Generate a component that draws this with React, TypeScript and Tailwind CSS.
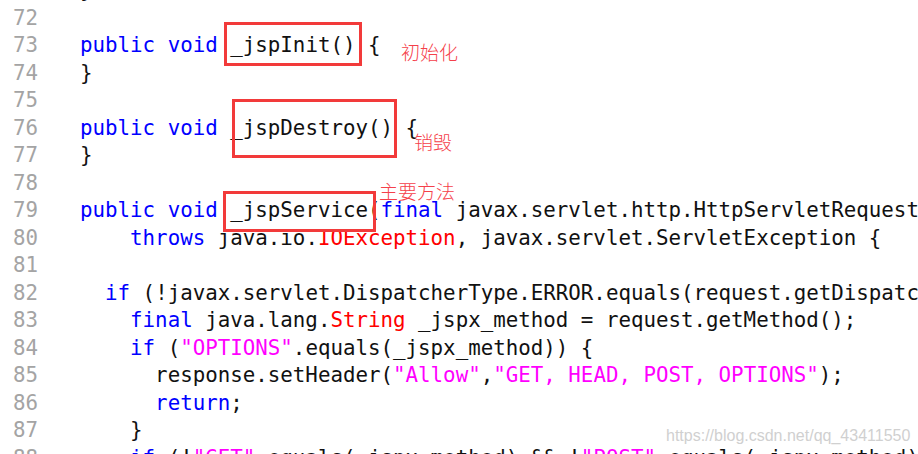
import React from 'react';

type Tok = [string, string];

const K = 'text-[#0000ff]';
const R = 'text-[#ff0000]';
const S = 'text-[#ff00ff]';
const N = 'text-[#111111]';

const lines: { no: number; toks: Tok[] }[] = [
  { no: 71, toks: [['}', N]] },
  { no: 72, toks: [] },
  { no: 73, toks: [['public void', K], [' _jspInit() {', N]] },
  { no: 74, toks: [['}', N]] },
  { no: 75, toks: [] },
  { no: 76, toks: [['public void', K], [' _jspDestroy() {', N]] },
  { no: 77, toks: [['}', N]] },
  { no: 78, toks: [] },
  {
    no: 79,
    toks: [
      ['public void', K],
      [' _jspService(', N],
      ['final', K],
      [' javax.servlet.http.HttpServletRequest request, javax.servlet.http.HttpServletResponse response)', N],
    ],
  },
  {
    no: 80,
    toks: [
      ['    throws', K],
      [' java.io.', N],
      ['IOException', R],
      [', javax.servlet.ServletException {', N],
    ],
  },
  { no: 81, toks: [] },
  {
    no: 82,
    toks: [
      ['  if', K],
      [' (!javax.servlet.DispatcherType.ERROR.equals(request.getDispatcherType())) {', N],
    ],
  },
  {
    no: 83,
    toks: [
      ['    final', K],
      [' java.lang.', N],
      ['String', R],
      [' _jspx_method = request.getMethod();', N],
    ],
  },
  {
    no: 84,
    toks: [
      ['    if', K],
      [' (', N],
      ['"OPTIONS"', S],
      ['.equals(_jspx_method)) {', N],
    ],
  },
  {
    no: 85,
    toks: [
      ['      response.setHeader(', N],
      ['"Allow"', S],
      [',', N],
      ['"GET, HEAD, POST, OPTIONS"', S],
      [');', N],
    ],
  },
  { no: 86, toks: [['      return', K], [';', N]] },
  { no: 87, toks: [['    }', N]] },
  {
    no: 88,
    toks: [
      ['    if', K],
      [' (!', N],
      ['"GET"', S],
      ['.equals(_jspx_method) && !', N],
      ['"POST"', S],
      ['.equals(_jspx_method) && !', N],
      ['"HEAD"', S],
      ['.equals(_jspx_method)) {', N],
    ],
  },
];

export default function App() {
  return (
    <div className="relative w-[918px] h-[454px] overflow-hidden bg-white">
      <div className="-mt-[23px] flex flex-col font-['DejaVu_Sans_Mono',monospace] text-[20.8px] leading-[27.5px]">
        {lines.map((line) => (
          <div key={line.no} className="flex h-[27.5px]">
            <div className="w-[38px] shrink-0 text-right text-[#a4a4a4]">{line.no}</div>
            <div className="pl-[42px] whitespace-pre">
              {line.toks.map(([text, cls], i) => (
                <span key={i} className={cls}>
                  {text}
                </span>
              ))}
            </div>
          </div>
        ))}
      </div>

      {/* hand-drawn annotation boxes over the code */}
      <div className="absolute left-[224px] top-[22px] w-[138px] h-[44px] border-[3px] border-[#f23a3a]" />
      <div className="absolute left-[232px] top-[99px] w-[165px] h-[59px] border-[3px] border-[#f23a3a]" />
      <div className="absolute left-[223px] top-[191px] w-[153px] h-[41px] border-[3px] border-[#f23a3a]" />

      <div className="absolute left-[401px] top-[40px] text-[19px] leading-[24px] text-[#f5404a] font-['Noto_Sans_CJK_SC',sans-serif] font-light">
        初始化
      </div>
      <div className="absolute left-[414px] top-[130px] text-[19px] leading-[24px] text-[#f5404a] font-['Noto_Sans_CJK_SC',sans-serif] font-light">
        销毁
      </div>
      <div className="absolute left-[379px] top-[179px] text-[19px] leading-[24px] text-[#f5404a] font-['Noto_Sans_CJK_SC',sans-serif] font-light">
        主要方法
      </div>

      <div className="absolute left-[666px] top-[426px] text-[16px] leading-[20px] text-[#d0d0d0] font-['Liberation_Sans',sans-serif]">
        https://blog.csdn.net/qq_43411550
      </div>
    </div>
  );
}
